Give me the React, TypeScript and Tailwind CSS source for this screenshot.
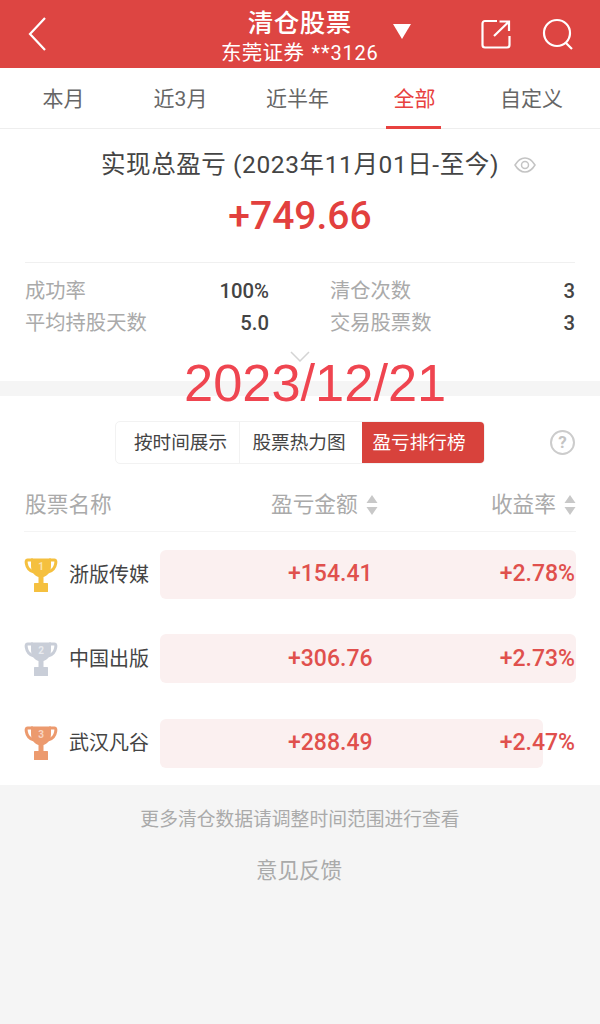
import React from 'react';

const cjk = "font-['Roboto','Noto_Sans_CJK_SC',sans-serif]";

const tabs = ['本月', '近3月', '近半年', '全部', '自定义'];

const rows = [
  { name: '浙版传媒', amount: '+154.41', rate: '+2.78%', rank: 1, color: '#f5c03f', bar: 'w-full' },
  { name: '中国出版', amount: '+306.76', rate: '+2.73%', rank: 2, color: '#c9ced8', bar: 'w-full' },
  { name: '武汉凡谷', amount: '+288.49', rate: '+2.47%', rank: 3, color: '#ec9a6e', bar: 'w-[383px]' },
];

const Trophy = ({ color, rank }: { color: string; rank: number }) => (
  <svg width="34" height="36" viewBox="0 0 34 36" className="shrink-0">
    <path d="M9 3H3.500C2 3 2 4.500 2.300 6.500C3 11 5.500 14 10 15" fill="none" stroke={color} strokeWidth="3" />
    <path d="M25 3H30.500C32 3 32 4.500 31.700 6.500C31 11 28.500 14 24 15" fill="none" stroke={color} strokeWidth="3" />
    <path d="M7 1.500H27V9C27 15 23 19 19.500 20V26H14.500V20C11 19 7 15 7 9Z" fill={color} />
    <rect x="10" y="26" width="14" height="9" rx="0.500" fill={color} />
    <text x="17" y="13" textAnchor="middle" fontSize="10" fontFamily="Roboto, sans-serif" fontWeight="700" fill="#ffffff" fillOpacity="0.6">
      {rank}
    </text>
  </svg>
);

const SortIcon = () => (
  <svg width="12" height="20" viewBox="0 0 12 20" className="ml-[8px]">
    <path d="M6 0L11.500 8H0.500Z" fill="#c8c8c8" />
    <path d="M6 20L0.500 12H11.500Z" fill="#c8c8c8" />
  </svg>
);

export default function App() {
  return (
    <div className={`relative h-[1024px] w-[600px] overflow-hidden bg-[#f5f5f5] ${cjk}`}>
      {/* Header */}
      <header className="relative flex h-[68px] items-center bg-[#dd4542] pl-[28px] pr-[26px] text-white">
        <svg width="18" height="34" viewBox="0 0 18 34" fill="none" stroke="#fff" strokeWidth="2.200">
          <path d="M17 1L2 17L17 33" />
        </svg>
        <div className="ml-[175px] flex flex-col items-center pt-[4px]">
          <div className="text-[25.500px] font-medium leading-[34px] tracking-[0.5px]">清仓股票</div>
          <div className="text-[20.500px] leading-[26px] tracking-[0.3px]">
            东莞证券 <span className="ml-[2px] text-[20px] tracking-[0.800px]">**3126</span>
          </div>
        </div>
        <svg width="20" height="16" viewBox="0 0 20 16" className="ml-[13px] mb-[6px]">
          <path d="M1 1H19L10 16Z" fill="#fff" />
        </svg>
        <div className="ml-auto flex items-center gap-[31px]">
          <svg width="30" height="30" viewBox="0 0 30 30" fill="none" stroke="#fff" strokeWidth="2.200">
            <path d="M16 2H4C2.500 2 1.500 3 1.500 4.500V26C1.500 27.500 2.500 28.500 4 28.500H26C27.500 28.500 28.500 27.500 28.500 26V17" />
            <path d="M13 17L27.500 3M18.500 2.500H28V12" />
          </svg>
          <svg width="32" height="32" viewBox="0 0 32 32" fill="none" stroke="#fff" strokeWidth="2.200">
            <circle cx="15" cy="15" r="13" />
            <path d="M24 25L30 31" />
          </svg>
        </div>
      </header>

      {/* Tabs */}
      <nav className="grid h-[61px] grid-cols-5 border-b border-[#eeeeee] bg-white pl-[5px] pr-[10px]">
        {tabs.map((tab) => (
          <div key={tab} className="relative flex items-center justify-center pt-[3px]">
            <span className={`text-[21px] ${tab === '全部' ? 'text-[#e8413f]' : 'text-[#666666]'}`}>{tab}</span>
            {tab === '全部' && <div className="absolute bottom-[-1px] left-[30px] h-[3px] w-[55px] bg-[#e8413f]" />}
          </div>
        ))}
      </nav>

      {/* Summary */}
      <section className="h-[252px] bg-white px-[25px] pt-[18px]">
        <div className="flex h-[36px] items-center justify-center text-[24.500px] tracking-[0.6px] text-[#444444]">
          <span>实现总盈亏 (2023年11月01日-至今)</span>
          <svg width="22" height="16" viewBox="0 0 22 16" fill="none" stroke="#c4c4c4" strokeWidth="1.500" className="ml-[15px] mr-[-37px]">
            <path d="M1 8C4 3 7 1 11 1C15 1 18 3 21 8C18 13 15 15 11 15C7 15 4 13 1 8Z" />
            <circle cx="11" cy="8" r="3.500" />
          </svg>
        </div>
        <div className="mt-[6px] text-center text-[39px] font-medium leading-[54px] text-[#e2403e]">+749.66</div>
        <div className="mt-[19px] border-t border-[#f0f0f0] pt-[14px]">
          <div className="grid grid-cols-[244px_245px] justify-between gap-y-[4px] text-[20.300px] leading-[28px]">
            <div className="flex justify-between">
              <span className="text-[#aaaaaa]">成功率</span>
              <span className="font-medium text-[#444444]">100%</span>
            </div>
            <div className="flex justify-between">
              <span className="text-[#aaaaaa]">清仓次数</span>
              <span className="font-medium text-[#444444]">3</span>
            </div>
            <div className="flex justify-between">
              <span className="text-[#aaaaaa]">平均持股天数</span>
              <span className="font-medium text-[#444444]">5.0</span>
            </div>
            <div className="flex justify-between">
              <span className="text-[#aaaaaa]">交易股票数</span>
              <span className="font-medium text-[#444444]">3</span>
            </div>
          </div>
          <div className="mt-[14px] flex justify-center">
            <svg width="20" height="11" viewBox="0 0 20 11" fill="none" stroke="#d4d4d4" strokeWidth="1.500">
              <path d="M1 1L10 10L19 1" />
            </svg>
          </div>
        </div>
      </section>

      {/* Date stamp on top of the screenshot */}
      <div className="absolute left-[184px] top-[350px] font-['Liberation_Sans',sans-serif] text-[52.400px] leading-[66px] text-[#ef4550]">
        2023/12/21
      </div>

      {/* Ranking */}
      <section className="mt-[15px] h-[389px] bg-white px-[24px] pt-[25px]">
        <div className="relative flex justify-center">
          <div className="flex h-[43px] w-[370px] overflow-hidden rounded-[5px] border border-[#f2f2f2] text-[18.600px]">
            <div className="flex w-[124px] items-center justify-center border-r border-[#f2f2f2] pl-[6px] pt-[3px] text-[#444444]">按时间展示</div>
            <div className="flex w-[122px] items-center justify-center pr-[4px] pt-[3px] text-[#444444]">股票热力图</div>
            <div className="flex flex-1 items-center justify-center bg-[#d8423c] pr-[8px] pt-[3px] text-white">盈亏排行榜</div>
          </div>
          <div className="absolute right-[1px] top-[9px] flex h-[25px] w-[25px] items-center justify-center rounded-full border-2 border-[#cccccc] text-[17px] font-bold leading-none text-[#c4c4c4]">
            ?
          </div>
        </div>

        <div className="mt-[20px] flex h-[48px] items-center justify-between border-b border-[#f4f4f4] pb-[4px] pl-[1px] text-[21.700px] text-[#aaaaaa]">
          <span>股票名称</span>
          <div className="ml-[46px] flex items-center">
            盈亏金额
            <SortIcon />
          </div>
          <div className="flex items-center">
            收益率
            <SortIcon />
          </div>
        </div>

        <div className="flex flex-col gap-[35.300px] pt-[18px]">
          {rows.map((row) => (
            <div key={row.name} className="flex h-[49px] items-center">
              <div className="flex w-[136px] items-center">
                <Trophy color={row.color} rank={row.rank} />
                <span className="ml-[11px] whitespace-nowrap text-[20px] text-[#444444]">{row.name}</span>
              </div>
              <div className="relative h-full w-[416px]">
                <div className={`h-full rounded-[6px] bg-[#fbf0f0] ${row.bar}`} />
                <div className="absolute inset-0 flex items-center pr-[1px] text-[23px] font-medium text-[#e0504d]">
                  <span className="ml-[128px]">{row.amount}</span>
                  <span className="ml-auto">{row.rate}</span>
                </div>
              </div>
            </div>
          ))}
        </div>
      </section>

      {/* Footer */}
      <footer className="flex flex-col items-center pt-[21px]">
        <div className="text-[18.800px] leading-[28px] text-[#aaaaaa]">更多清仓数据请调整时间范围进行查看</div>
        <div className="mt-[23px] pr-[2px] text-[21.500px] leading-[28px] text-[#aaaaaa]">意见反馈</div>
      </footer>
    </div>
  );
}
